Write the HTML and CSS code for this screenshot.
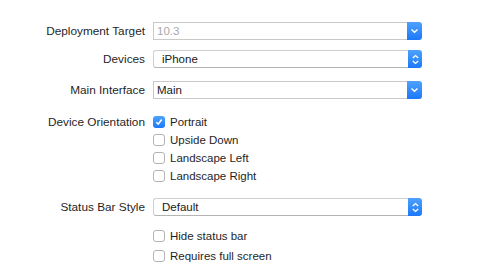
FILE: index.html
```html
<!DOCTYPE html>
<html lang="en">
<head>
    <meta charset="UTF-8">
    <meta name="viewport" content="width=device-width, initial-scale=1.0">
    <title>Deployment Info</title>
    <link rel="stylesheet" href="styles.css">
</head>
<body>
    <div class="panel">
        <!-- Deployment target combo box -->
        <div class="row row-target">
            <span class="label">Deployment Target</span>
            <div class="combo">
                <span class="field disabled">10.3</span>
                <span class="arrow">
                    <svg width="9" height="6" viewBox="0 0 9 6"><path d="M1.5 1.5 L4.5 4.2 L7.5 1.5" fill="none" stroke="#fff" stroke-width="1.5"/></svg>
                </span>
            </div>
        </div>

        <!-- Devices popup -->
        <div class="row row-devices">
            <span class="label">Devices</span>
            <div class="popup">
                <span class="field">iPhone</span>
                <span class="arrow">
                    <svg width="9" height="11" viewBox="0 0 9 11"><path d="M1.8 4 L4.5 1.6 L7.2 4 M1.8 7 L4.5 9.4 L7.2 7" fill="none" stroke="#fff" stroke-width="1.4"/></svg>
                </span>
            </div>
        </div>

        <!-- Main interface combo box -->
        <div class="row row-main">
            <span class="label">Main Interface</span>
            <div class="combo">
                <span class="field">Main</span>
                <span class="arrow">
                    <svg width="9" height="6" viewBox="0 0 9 6"><path d="M1.5 1.5 L4.5 4.2 L7.5 1.5" fill="none" stroke="#fff" stroke-width="1.5"/></svg>
                </span>
            </div>
        </div>

        <!-- Orientation checkboxes -->
        <div class="group row-orientation">
            <span class="label">Device Orientation</span>
            <div class="checks">
                <div class="check">
                    <span class="box checked">
                        <svg width="8" height="8" viewBox="0 0 8 8"><path d="M1.3 4.2 L3.2 6.1 L6.7 1.5" fill="none" stroke="#fff" stroke-width="1.5"/></svg>
                    </span>
                    Portrait
                </div>
                <div class="check"><span class="box"></span>Upside Down</div>
                <div class="check"><span class="box"></span>Landscape Left</div>
                <div class="check"><span class="box"></span>Landscape Right</div>
            </div>
        </div>

        <!-- Status bar popup -->
        <div class="row row-status">
            <span class="label">Status Bar Style</span>
            <div class="popup">
                <span class="field">Default</span>
                <span class="arrow">
                    <svg width="9" height="11" viewBox="0 0 9 11"><path d="M1.8 4 L4.5 1.6 L7.2 4 M1.8 7 L4.5 9.4 L7.2 7" fill="none" stroke="#fff" stroke-width="1.4"/></svg>
                </span>
            </div>
        </div>

        <div class="group row-statusopts">
            <span class="label"></span>
            <div class="checks wide">
                <div class="check"><span class="box"></span>Hide status bar</div>
                <div class="check"><span class="box"></span>Requires full screen</div>
            </div>
        </div>
    </div>
</body>
</html>
```

FILE: styles.css
```css
body {
    margin: 0;
    padding: 0;
    background-color: #ffffff;
    font-family: 'Liberation Sans', Arial, sans-serif;
    font-size: 11.5px;
    color: #1f1f1f;
}

.panel {
    display: flex;
    flex-direction: column;
    padding-top: 22px;
}

.row,
.group {
    display: grid;
    grid-template-columns: 145px 269px;
    column-gap: 8px;
}

.row {
    height: 18px;
    align-items: center;
}

.group {
    align-items: start;
}

.label {
    text-align: right;
    white-space: nowrap;
    font-size: 11.8px;
}

.row-devices {
    margin-top: 10px;
}

.row-main {
    margin-top: 13px;
}

.row-orientation {
    margin-top: 14px;
}

.row-orientation .label {
    line-height: 18px;
}

.row-status {
    margin-top: 13px;
}

.row-statusopts {
    margin-top: 11px;
}

/* combo box: square text field + blue arrow button */
.combo,
.popup {
    display: flex;
    height: 18px;
    box-sizing: border-box;
}

.combo .field {
    flex: 1;
    border: 1px solid #c9c9c9;
    border-right: none;
    padding-left: 3px;
    line-height: 16px;
    color: #1a1a1a;
}

.popup .field {
    flex: 1;
    border: 1px solid #cfcfcf;
    border-bottom-color: #b4b4b4;
    border-right: none;
    border-radius: 3px 0 0 3px;
    padding-left: 8px;
    line-height: 16px;
    color: #1a1a1a;
}

.field.disabled {
    color: #a8a8a8;
}

.arrow {
    width: 15px;
    display: flex;
    align-items: center;
    justify-content: center;
    background: linear-gradient(#4ea2fd, #1b78fa);
    border-radius: 0 3px 3px 0;
}

.popup .arrow {
    width: 14px;
}

.checks {
    display: flex;
    flex-direction: column;
}

.checks.wide .check + .check {
    margin-top: 2px;
}

.check {
    display: flex;
    align-items: center;
    height: 18px;
    white-space: nowrap;
}

.box {
    width: 12px;
    height: 12px;
    box-sizing: border-box;
    border: 1px solid #b3b3b3;
    border-radius: 3px;
    background-color: #ffffff;
    margin-right: 5px;
    display: flex;
    align-items: center;
    justify-content: center;
}

.box.checked {
    border: none;
    background: linear-gradient(#4ea2fd, #1b78fa);
}
```
